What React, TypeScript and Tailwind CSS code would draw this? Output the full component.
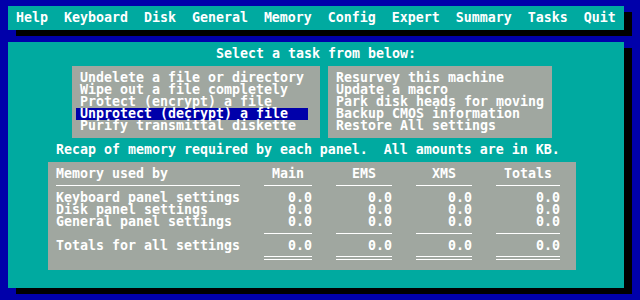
const menu = ['Help', 'Keyboard', 'Disk', 'General', 'Memory', 'Config', 'Expert', 'Summary', 'Tasks', 'Quit'];

const leftTasks = [
  'Undelete a file or directory',
  'Wipe out a file completely',
  'Protect (encrypt) a file',
  'Unprotect (decrypt) a file',
  'Purify transmittal diskette',
];

const rightTasks = [
  'Resurvey this machine',
  'Update a macro',
  'Park disk heads for moving',
  'Backup CMOS information',
  'Restore All settings',
];

const panels = ['Keyboard panel settings', 'Disk panel settings', 'General panel settings'];

const Rule = ({ double }: { double?: boolean }) => (
  <div className="h-[12px]">
    {double ? (
      <>
        <div className="mt-[4px] h-px bg-white" />
        <div className="mt-[2px] h-px bg-white" />
      </>
    ) : (
      <div className="mt-[5px] h-px bg-white" />
    )}
  </div>
);

const Values = () => (
  <>
    <div className="text-right">0.0</div>
    <div className="text-right">0.0</div>
    <div className="text-right">0.0</div>
    <div className="text-right">0.0</div>
  </>
);

export default function App() {
  const selected = 3;

  return (
    <div className="w-[640px] h-[300px] overflow-hidden bg-[#0000aa] font-['DejaVu_Sans_Mono',monospace] text-[13.29px] leading-[12px] font-bold text-white whitespace-pre">
      {/* Menu bar */}
      <div className="ml-2 mt-[6px] w-[616px] h-[24px] bg-[#00aaa0] pl-2 pt-[6px] shadow-[8px_6px_0_0_#000]">
        {menu.join('  ')}
      </div>

      {/* Main panel */}
      <div className="ml-2 mt-[12px] w-[616px] h-[246px] bg-[#00aaa0] pt-[6px] shadow-[8px_6px_0_0_#000]">
        <div className="text-center">Select a task from below:</div>

        <div className="flex gap-2 pl-[64px] mt-[6px]">
          <div className="w-[248px] h-[72px] bg-[#a0a7a0] pt-[6px] pl-1">
            {leftTasks.map((t, i) => (
              <div key={t} className={i === selected ? 'w-[232px] bg-[#0000aa] pl-1' : 'pl-1'}>
                {t}
              </div>
            ))}
          </div>
          <div className="w-[224px] h-[72px] bg-[#a0a7a0] pt-[6px] pl-2">
            {rightTasks.map((t) => (
              <div key={t}>{t}</div>
            ))}
          </div>
        </div>

        <div className="pl-[48px] mt-[6px]">Recap of memory required by each panel.  All amounts are in KB.</div>

        {/* Memory table */}
        <div className="ml-[40px] mt-[6px] w-[528px] h-[108px] bg-[#a0a7a0] pt-[6px] pl-2 grid grid-cols-[184px_48px_56px_56px_64px] gap-x-6 auto-rows-[12px]">
          <div>Memory used by</div>
          <div className="text-center">Main</div>
          <div className="text-center">EMS</div>
          <div className="text-center">XMS</div>
          <div className="text-center">Totals</div>

          <Rule />
          <Rule />
          <Rule />
          <Rule />
          <Rule />

          {panels.map((p) => (
            <div key={p} className="contents">
              <div>{p}</div>
              <Values />
            </div>
          ))}

          <div />
          <Rule />
          <Rule />
          <Rule />
          <Rule />

          <div>Totals for all settings</div>
          <Values />

          <div />
          <Rule double />
          <Rule double />
          <Rule double />
          <Rule double />
        </div>
      </div>
    </div>
  );
}
